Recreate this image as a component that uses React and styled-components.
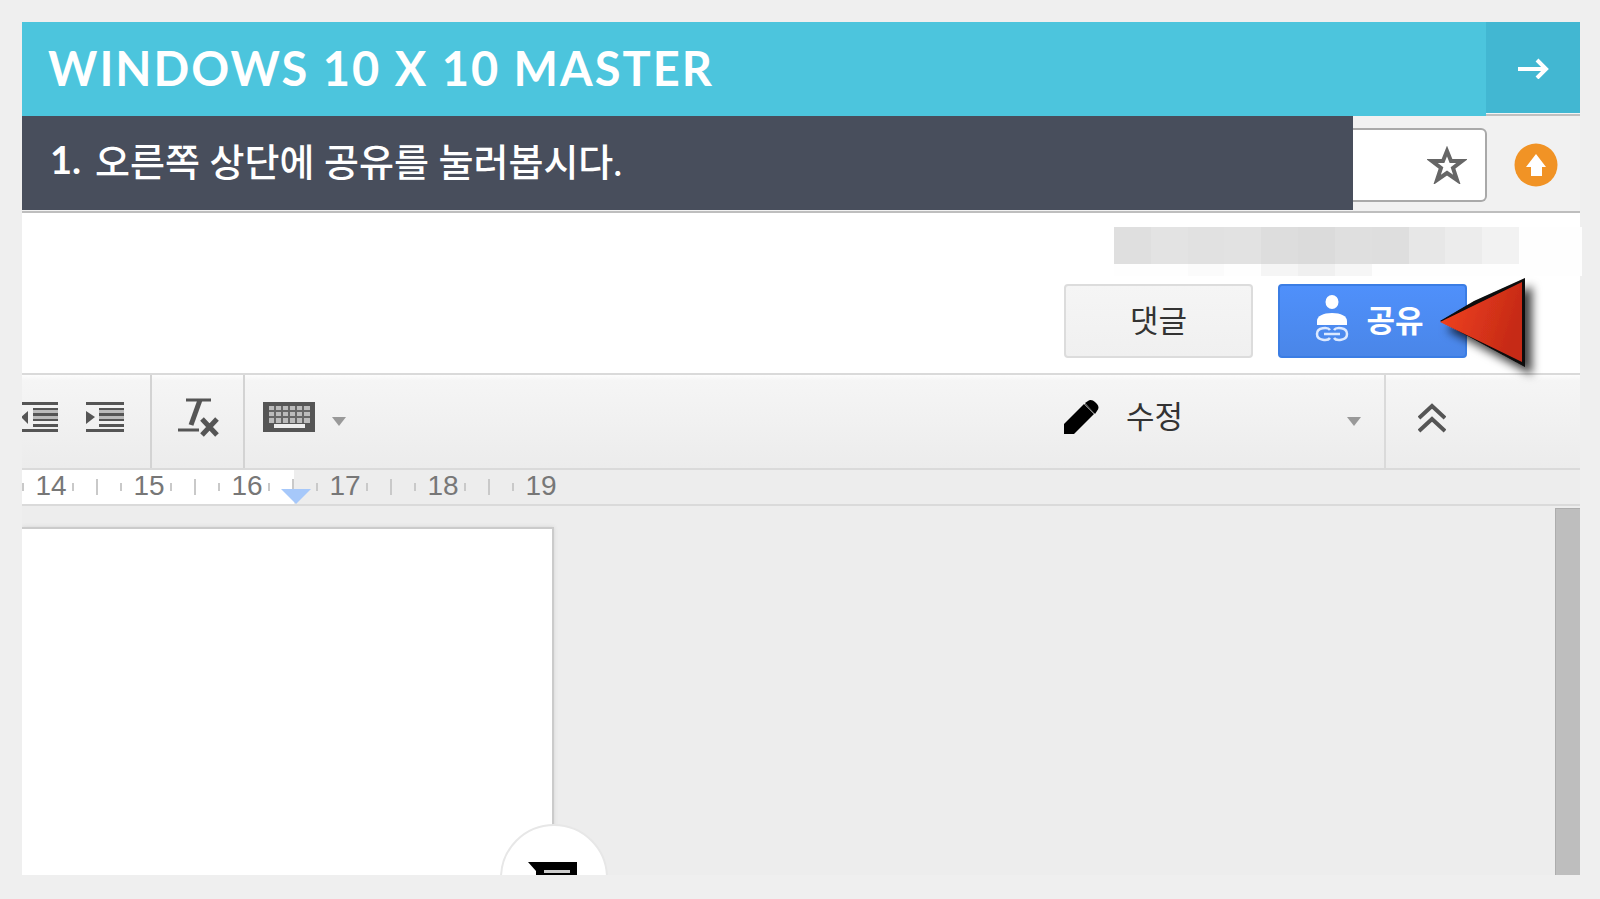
import React from "react";
import styled, { createGlobalStyle } from "styled-components";

const GlobalStyle = createGlobalStyle`
  *, *::before, *::after { box-sizing: border-box; }
  body {
    margin: 0;
    background: #efefef;
    font-family: "Liberation Sans", "Noto Sans CJK KR", sans-serif;
  }
  button, select { font-family: inherit; margin: 0; padding: 0; border: 0; background: none; color: inherit; }
  svg { display: block; flex: none; }
`;

const Frame = styled.main`
  display: flex;
  flex-direction: column;
  min-height: 100vh;
  padding: 22px 20px 24px 22px;
`;

const TitleBar = styled.header`
  display: flex;
  height: 94px;
  background: linear-gradient(to right, #4cc5dd 92%, #c0c0c0 92%);
`;

const Title = styled.h1`
  flex: 1;
  display: flex;
  align-items: center;
  margin: 0;
  padding: 0 0 2px 26px;
  background: #4cc5dd;
  color: #fff;
  font-family: Lato, sans-serif;
  font-size: 47px;
  font-weight: 700;
  letter-spacing: 2px;
  white-space: nowrap;
`;

const NextButton = styled.button`
  display: flex;
  align-items: center;
  justify-content: center;
  width: 94px;
  height: 92px;
  background: #42b7d2;
  border-bottom: 1px solid #f4f4f4;
`;

const StepRow = styled.section`
  display: flex;
  height: 97px;
  background: #f1f1f1;
  border-bottom: 2px solid #bebebe;
`;

const Step = styled.h2`
  flex: 1;
  display: flex;
  align-items: center;
  gap: 14px;
  height: 94px;
  margin: 0;
  padding: 0 0 8px 28px;
  background: #484e5c;
  color: #fff;
  font-family: Lato, "Noto Sans CJK KR", sans-serif;
  font-size: 38px;
  font-weight: 500;
  white-space: nowrap;
`;

const StepNumber = styled.span`
  font-weight: 700;
`;

const BrowserTools = styled.div`
  display: flex;
  align-items: center;
  width: 227px;
  height: 97px;
`;

const AddressEnd = styled.div`
  display: flex;
  align-items: center;
  justify-content: flex-end;
  width: 134px;
  height: 74px;
  padding-right: 18px;
  background: #fff;
  border: 2px solid #a9a9a9;
  border-left: 0;
  border-radius: 0 6px 6px 0;
`;

const IconButton = styled.button`
  display: flex;
  align-items: center;
  justify-content: center;
`;

const UpdateButton = styled(IconButton)`
  margin-left: 27px;
`;

const DocHeader = styled.section`
  display: flex;
  flex-direction: column;
  align-items: flex-end;
  height: 162px;
  padding-top: 14px;
  background: #fff;
  border-bottom: 2px solid #dadada;
`;

const Mosaic = styled.div`
  display: grid;
  grid-template-columns: repeat(11, 1fr);
  grid-template-rows: 37px 12px;
  width: 468px;
  margin-right: -2px;
  padding-right: 63px;
  background: #fefefe;
`;

const Tile = styled.span`
  background: ${(p) => p.$tone};
`;

const Actions = styled.div`
  display: flex;
  gap: 25px;
  margin-top: 8px;
  padding-right: 113px;
`;

const ActionButton = styled.button`
  display: flex;
  align-items: center;
  justify-content: center;
  gap: 17px;
  width: 189px;
  height: 74px;
  padding: 0 ${(p) => (p.$primary ? 6 : 0)}px 6px 0;
  border: 2px solid ${(p) => (p.$primary ? "#3b7de4" : "#dcdcdc")};
  border-radius: 4px;
  background: ${(p) => (p.$primary ? "linear-gradient(#4f90fb, #4a86e8)" : "linear-gradient(#f5f5f5, #f0f0f0)")};
  color: ${(p) => (p.$primary ? "#fff" : "#333")};
  font-size: 31px;
  font-weight: ${(p) => (p.$primary ? 700 : 400)};
`;

const ShareWrap = styled.div`
  position: relative;
`;

const Pointer = styled.svg`
  position: absolute;
  top: -10px;
  right: -85px;
  pointer-events: none;
`;

const Toolbar = styled.div`
  display: flex;
  height: 95px;
  background: linear-gradient(#fdfdfd, #f5f5f5 6%, #ececec);
  border-bottom: 2px solid #dadada;
`;

const ToolGroup = styled.div`
  display: flex;
  align-items: center;
  gap: ${(p) => p.$gap || 0}px;
  width: ${(p) => p.$width}px;
  padding: 0 0 9px ${(p) => p.$inset || 0}px;
  border-right: 2px solid ${(p) => (p.$line ? "#d3d3d3" : "transparent")};
  overflow: hidden;
`;

const Spacer = styled.div`
  flex: 1;
`;

const ModeLabel = styled.label`
  display: flex;
  align-items: center;
  width: 322px;
  padding-bottom: 9px;
  border-right: 2px solid #dadada;
`;

const ModeSelect = styled.select`
  appearance: none;
  flex: 1;
  height: 48px;
  padding-left: 26px;
  color: #333;
  font-size: 31px;
`;

const CollapseGroup = styled.div`
  display: flex;
  align-items: center;
  width: 194px;
  padding: 0 0 8px 32px;
`;

const Caret = styled.span`
  width: 0;
  height: 0;
  margin: 8px ${(p) => p.$after || 0}px 0 0;
  border: 7px solid transparent;
  border-top: 9px solid #999;
  border-bottom: 0;
`;

const Ruler = styled.div`
  position: relative;
  display: flex;
  align-items: center;
  height: 36px;
  background: linear-gradient(to right, #fff 272px, #ededed 272px);
  border-bottom: 2px solid #dadada;
`;

const RulerUnit = styled.div`
  display: flex;
  align-items: center;
  gap: 22px;
  width: 98px;
`;

const RulerNumber = styled.span`
  width: 42px;
  margin-right: -22px;
  padding-bottom: 2px;
  color: #777;
  font-size: 28px;
  line-height: 32px;
  text-align: center;
`;

const Tick = styled.i`
  width: 2px;
  height: ${(p) => (p.$long ? 16 : 8)}px;
  background: #c9c9c9;
`;

const FirstTick = styled(Tick)`
  margin-right: 6px;
`;

const IndentMarker = styled.span`
  position: absolute;
  left: 259px;
  bottom: 0;
  border: 15px solid transparent;
  border-top: 15px solid #a6c8fa;
  border-bottom: 0;
`;

const Canvas = styled.section`
  position: relative;
  display: flex;
  flex: 1;
  justify-content: space-between;
  min-height: 300px;
  background: #ededed;
  overflow: hidden;
`;

const Page = styled.article`
  position: relative;
  width: 532px;
  margin-top: 21px;
  background: #fff;
  border: solid #cbcbcb;
  border-width: 2px 2px 0 0;
  box-shadow: 0 0 4px #d4d4d4;
`;

const CommentBubble = styled.button`
  position: absolute;
  right: -56px;
  bottom: -57px;
  display: flex;
  justify-content: center;
  width: 108px;
  height: 108px;
  padding: 36px 2px 0 0;
  background: #fff;
  border: 2px solid #e7e7e7;
  border-radius: 50%;
`;

const ScrollThumb = styled.div`
  width: 25px;
  margin-top: 2px;
  background: #bebebe;
  border: solid #adadad;
  border-width: 1px 0 0 1px;
`;

const topTiles = ["#dfdfdf", "#e3e3e3", "#e1e1e1", "#e2e2e2", "#dddddd", "#dbdbdb", "#dfdfdf", "#dedede", "#e7e7e7", "#ececec", "#f2f2f2"];
const lowTiles = ["#fefefe", "#fefefe", "#fbfbfb", "#fefefe", "#f5f5f5", "#f0f0f0", "#f6f6f6", "#fefefe", "#fefefe", "#fefefe", "#fefefe"];

const IndentIcon = ({ out }) => (
  <svg width={out ? 36 : 38} height="32" viewBox={out ? "2 0 36 32" : "0 0 38 32"} fill="#555">
    <path d="M0 1h38v3H0zM13 7h25v2H13zM13 12h25v3H13zM13 18h25v2H13zM13 23h25v3H13zM0 28h38v3H0z" />
    <path d="M13 9h25v3H13zM13 15h25v3H13z" opacity=".35" />
    <path d={out ? "M8 10v13L1 16z" : "M0 10v13L9 16z"} />
  </svg>
);

const ClearFormatIcon = () => (
  <svg width="42" height="40" viewBox="0 0 42 40" fill="none" stroke="#555">
    <path d="M8 3h25M0 33h21" strokeWidth="3" />
    <path d="M22 3 13 28" strokeWidth="5" />
    <path d="m24 22 15 16M39 22 24 38" strokeWidth="5" />
  </svg>
);

const KeyboardIcon = () => (
  <svg width="52" height="30" viewBox="0 0 52 30">
    <path fill="#555" d="M0 0h52v30H0z" />
    <path fill="#bbb" d="M6 4h41v17H6z" />
    <path stroke="#666" strokeWidth="2" d="M6 9h41M6 15h41M12 4v17M19 4v17M26 4v17M33 4v17M40 4v17" />
    <path fill="#eee" d="M11 22h31v4H11z" />
  </svg>
);

const PencilIcon = () => (
  <svg width="36" height="36" viewBox="0 0 36 36">
    <path d="M0 25 20 5l10 10-20 20H0zM21 4l3-2c2-2 5-1 7 1l2 2c2 2 2 5 0 7l-2 3z" />
    <path d="m21 5 9 9" stroke="#555" strokeWidth="1" />
  </svg>
);

const ShareIcon = () => (
  <svg width="34" height="48" viewBox="0 0 34 48" fill="#fff">
    <ellipse cx="17" cy="8" rx="6.5" ry="7" />
    <path d="M2 31v-4c0-5 6-8 15-8s15 3 15 8v4z" />
    <g fill="none" stroke="#dce9ff" strokeWidth="2.5">
      <path d="M15 36c-2-3-13-3-13 4s11 7 13 4M19 36c2-3 13-3 13 4s-11 7-13 4M9 40h16" />
    </g>
  </svg>
);

export default function App() {
  return (
    <>
      <GlobalStyle />
      <Frame>
        <TitleBar>
          <Title>WINDOWS 10 X 10 MASTER</Title>
          <NextButton aria-label="다음">
            <svg width="32" height="22" viewBox="0 0 32 22" fill="none" stroke="#fff" strokeWidth="4">
              <path d="M1 12h27" />
              <path d="m20 3 9 9-9 9" />
            </svg>
          </NextButton>
        </TitleBar>
        <StepRow>
          <Step>
            <StepNumber>1.</StepNumber>
            <span>오른쪽 상단에 공유를 눌러봅시다.</span>
          </Step>
          <BrowserTools>
            <AddressEnd>
              <IconButton aria-label="북마크">
                <svg width="40" height="38" viewBox="0 0 40 38" fill="none" stroke="#666" strokeWidth="4">
                  <path d="m20 5 4 10h11l-9 7 4 12-10-7-10 7 4-12-9-7h11z" />
                </svg>
              </IconButton>
            </AddressEnd>
            <UpdateButton aria-label="업로드">
              <svg width="44" height="44" viewBox="0 0 44 44">
                <circle cx="22" cy="22" r="21.5" fill="#f19325" />
                <path d="m22 11 10 13h-4v9H17v-9h-5z" fill="#fff" />
              </svg>
            </UpdateButton>
          </BrowserTools>
        </StepRow>
        <DocHeader>
          <Mosaic>
            {topTiles.map((tone, i) => <Tile key={"t" + i} $tone={tone} />)}
            {lowTiles.map((tone, i) => <Tile key={"l" + i} $tone={tone} />)}
          </Mosaic>
          <Actions>
            <ActionButton>댓글</ActionButton>
            <ShareWrap>
              <ActionButton $primary><ShareIcon />공유</ActionButton>
              <Pointer width="116" height="120" viewBox="0 0 116 120">
                <defs>
                  <linearGradient id="red" x1="0" x2="1" y1="0" y2=".3">
                    <stop offset="0" stopColor="#f4441f" />
                    <stop offset="1" stopColor="#c62a17" />
                  </linearGradient>
                  <filter id="shade" x="-20%" y="-20%" width="150%" height="150%">
                    <feDropShadow dx="7" dy="8" stdDeviation="5" floodColor="#000" floodOpacity=".75" />
                  </filter>
                </defs>
                <g filter="url(#shade)">
                  <path d="M4 47 38 27 89 4v89z" fill="#080808" />
                  <path d="M4 48 86 8v80z" fill="url(#red)" />
                </g>
              </Pointer>
            </ShareWrap>
          </Actions>
        </DocHeader>
        <Toolbar>
          <ToolGroup $width={130} $gap={28} $line>
            <IconButton aria-label="내어쓰기"><IndentIcon out /></IconButton>
            <IconButton aria-label="들여쓰기"><IndentIcon /></IconButton>
          </ToolGroup>
          <ToolGroup $width={93} $inset={26} $line>
            <IconButton aria-label="서식 지우기"><ClearFormatIcon /></IconButton>
          </ToolGroup>
          <ToolGroup $width={120} $inset={18}>
            <IconButton aria-label="입력 도구"><KeyboardIcon /></IconButton>
            <Spacer />
            <Caret $after={17} />
          </ToolGroup>
          <Spacer />
          <ModeLabel>
            <PencilIcon />
            <ModeSelect aria-label="모드" defaultValue="edit">
              <option value="edit">수정</option>
            </ModeSelect>
            <Caret $after={23} />
          </ModeLabel>
          <CollapseGroup>
            <IconButton aria-label="메뉴 숨기기">
              <svg width="28" height="30" viewBox="0 0 28 30" fill="none" stroke="#555" strokeWidth="4">
                <path d="M1 15 14 3l13 12M1 28l13-12 13 12" />
              </svg>
            </IconButton>
          </CollapseGroup>
        </Toolbar>
        <Ruler>
          <FirstTick />
          {[14, 15, 16, 17, 18].map((n) => (
            <RulerUnit key={n}>
              <RulerNumber>{n}</RulerNumber>
              <Tick />
              <Tick $long />
              <Tick />
            </RulerUnit>
          ))}
          <RulerNumber>19</RulerNumber>
          <IndentMarker />
        </Ruler>
        <Canvas>
          <Page>
            <CommentBubble aria-label="댓글 추가">
              <svg width="50" height="44" viewBox="0 0 50 44">
                <path d="M0 0h49v40H8V9z" />
                <path d="M16 8h26v3H16zM16 13h26v3H16z" fill="#ccc" />
              </svg>
            </CommentBubble>
          </Page>
          <ScrollThumb />
        </Canvas>
      </Frame>
    </>
  );
}
